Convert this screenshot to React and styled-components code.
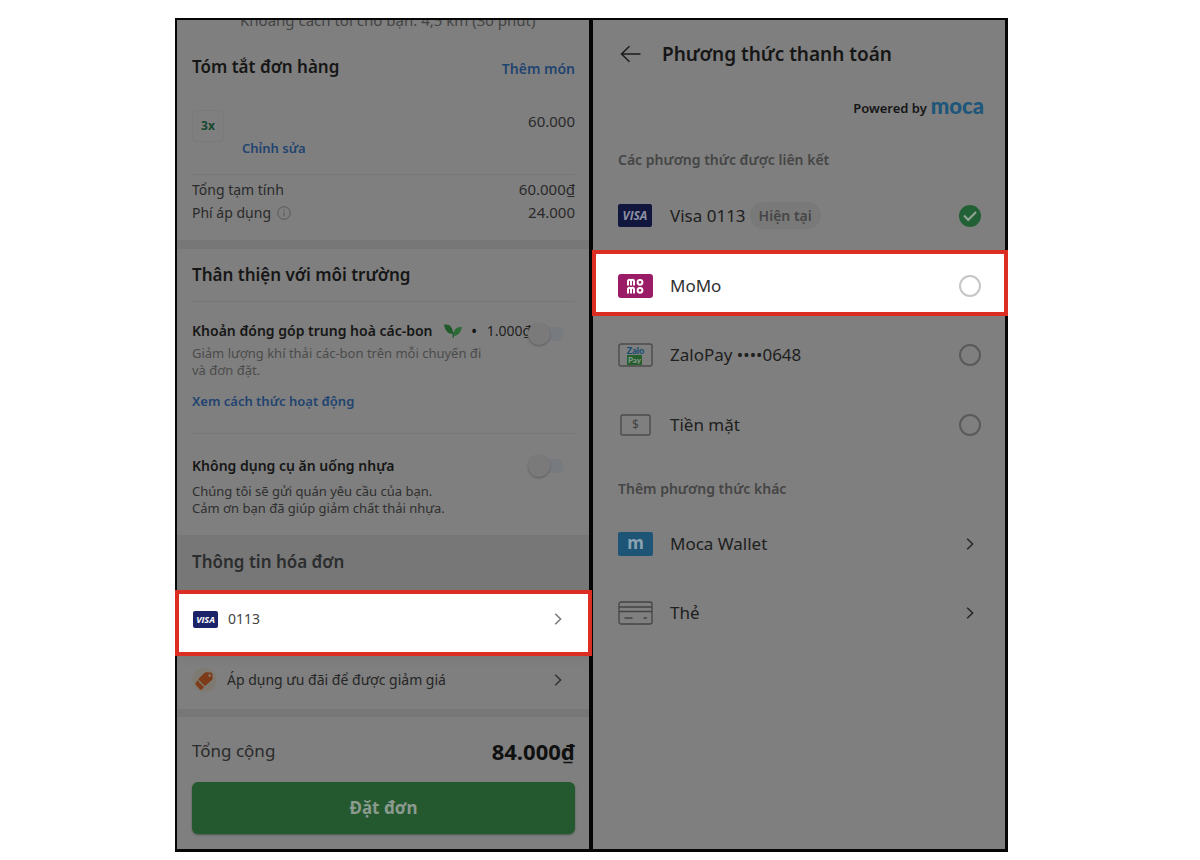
import React from "react";
import styled, { createGlobalStyle } from "styled-components";

const GlobalStyle = createGlobalStyle`
  * { box-sizing: border-box; }
  body {
    margin: 0;
    background: #fff;
    font-family: "Noto Sans", "Open Sans", sans-serif;
    color: #262626;
  }
  h1, h2, h3, p { margin: 0; }
  button { font-family: inherit; }
`;

const Page = styled.main`
  padding: 18px 16% 8px 175px;
`;

const Frame = styled.div`
  display: grid;
  grid-template-columns: 1fr 1fr;
  gap: 4px;
  padding: 2px 3px 3px 2px;
  background: #060606;
`;

const Screen = styled.section`
  min-width: 0;
  display: flex;
  flex-direction: column;
  background: #7f7f7f;
`;

const Block = styled.div`
  padding: ${(p) => p.$top}px 14px ${(p) => p.$bottom || 0}px 15px;
`;

const Clip = styled.div`
  height: 10px;
  display: flex;
  align-items: flex-end;
  overflow: hidden;
  padding-left: 63px;
  font-size: 15px;
  line-height: 20px;
  color: #444;
  white-space: nowrap;
`;

const Row = styled.div`
  display: flex;
  align-items: flex-end;
  justify-content: space-between;
`;

const Heading = styled.h2`
  font-size: 17px;
  line-height: 24px;
  font-weight: 600;
  color: ${(p) => (p.$soft ? "#2b2d2e" : "#161616")};
`;

const Link = styled.a`
  font-size: 14px;
  line-height: 20px;
  font-weight: 600;
  color: #1f4470;
  text-decoration: none;
  white-space: nowrap;
`;

const HowLink = styled(Link)`
  display: block;
  margin-top: 12px;
  font-size: 13px;
`;

const EditLink = styled(Link)`
  margin-top: 28px;
  font-size: 13px;
`;

const Item = styled.div`
  display: grid;
  grid-template-columns: 32px 1fr auto;
  column-gap: 18px;
  margin-bottom: 3px;
  padding: 31px 0 16px;
  border-bottom: 1px solid #777;
`;

const Quantity = styled.span`
  width: 32px;
  height: 32px;
  border: 1px solid #7a7a7a;
  border-radius: 4px;
  font-size: 12px;
  line-height: 30px;
  font-weight: 700;
  text-align: center;
  color: #15482f;
`;

const Price = styled.span`
  font-size: 15px;
  line-height: 23px;
  color: #2a2a2a;
`;

const Label = styled.span`
  display: inline-flex;
  align-items: center;
  gap: 6px;
  font-size: 14px;
  line-height: 23px;
  color: #2a2a2a;
`;

const Band = styled.div`
  height: ${(p) => p.$h}px;
  background: #777;
`;

const Rule = styled.hr`
  height: 1px;
  border: 0;
  margin: ${(p) => p.$top}px 0 0;
  background: #777;
`;

const OptionRow = styled.div`
  display: flex;
  align-items: ${(p) => (p.$low ? "flex-end" : "center")};
  height: ${(p) => (p.$low ? 26 : 24)}px;
  margin-top: ${(p) => p.$top}px;
`;

const OptionText = styled.label`
  flex: 1;
  min-width: 0;
  display: flex;
  align-self: flex-start;
  align-items: center;
  white-space: nowrap;
  font-size: 14px;
  line-height: 24px;
  font-weight: 600;
  color: #161616;
`;

const Leaf = styled.svg`
  flex: none;
  margin: 0 10px 0 11px;
`;

const Cost = styled.span`
  margin-left: 10px;
  font-weight: 400;
  color: #222;
`;

const Toggle = styled.input`
  appearance: none;
  position: relative;
  flex: none;
  display: flex;
  align-items: center;
  width: 35px;
  height: 22px;
  margin: 0 12px 0 0;
  background: linear-gradient(#777a7e, #777a7e) right center / 20px 14px no-repeat;
  border-radius: 11px;
  &::before {
    content: "";
    width: 22px;
    height: 22px;
    border-radius: 50%;
    background: #7a7a7a;
    box-shadow: 0 1px 2px #5c5c5c;
  }
`;

const Note = styled.p`
  margin-top: ${(p) => p.$top || 0}px;
  font-size: 13px;
  line-height: 17px;
  color: ${(p) => (p.$dark ? "#2f2f2f" : "#4b4b4b")};
`;

const BillHead = styled.div`
  margin-top: 18px;
  padding: 15px 15px 16px;
  background: #777;
`;

const highlight = `
  position: relative;
  border: 4px solid #db2d22;
  background: #fff;
`;

const CardRow = styled.button`
  ${highlight}
  display: flex;
  align-items: center;
  height: 66px;
  margin: 0 -3px 0 -2px;
  padding: 0 26px 8px 14px;
  gap: 10px;
  font-size: 14px;
  line-height: 20px;
  text-align: left;
  color: #444;
`;

const OfferRow = styled.button`
  display: flex;
  align-items: center;
  gap: 10px;
  width: 100%;
  height: 53px;
  padding: 0 27px 6px 15px;
  border: 0;
  background: linear-gradient(#7b7b7b, #7f7f7f 12px);
  font-size: 14px;
  line-height: 20px;
  text-align: left;
  color: #262626;
`;

const Grow = styled.span`
  flex: 1;
`;

const Total = styled.strong`
  font-size: 22px;
  line-height: 28px;
  font-weight: 700;
  color: #101010;
`;

const TotalLabel = styled.span`
  font-size: 17px;
  line-height: 28px;
  color: #2a2a2a;
`;

const OrderButton = styled.button`
  display: block;
  width: 100%;
  height: 52px;
  margin: 17px 0 15px;
  border: 0;
  border-radius: 6px;
  background: #24592f;
  box-shadow: 0 1px 2px #4a5a4e;
  font-size: 17px;
  line-height: 24px;
  font-weight: 700;
  color: #8b9a8e;
`;

const TopBar = styled.header`
  display: flex;
  align-items: center;
  gap: 21px;
  padding: 20px 24px 0 27px;
`;

const BackButton = styled.button`
  display: flex;
  padding: 0;
  border: 0;
  background: none;
`;

const Title = styled.h1`
  font-size: 19px;
  line-height: 28px;
  font-weight: 600;
  color: #161616;
`;

const Powered = styled.p`
  display: flex;
  align-items: center;
  justify-content: flex-end;
  gap: 4px;
  height: 24px;
  margin-top: 28px;
  padding-right: 21px;
  font-size: 13px;
  line-height: 24px;
  font-weight: 600;
  color: #161616;
`;

const Moca = styled.span`
  font-family: Lato, sans-serif;
  font-size: 22px;
  line-height: 20px;
  padding-bottom: 4px;
  font-weight: 900;
  color: #1d567a;
`;

const GroupTitle = styled.h3`
  margin-top: ${(p) => p.$top}px;
  padding-left: 25px;
  font-size: 14px;
  line-height: 20px;
  font-weight: 600;
  color: #454545;
`;

const Method = styled.label`
  display: flex;
  align-items: center;
  height: ${(p) => p.$h}px;
  padding: ${(p) => p.$drop || 0}px 24px 0 25px;
  font-size: 17px;
  line-height: 24px;
  color: #202020;
`;

const ActiveMethod = styled(Method)`
  ${highlight}
  margin: 0 -3px 0 -1px;
  padding: 5px 23px 0 22px;
  color: #303030;
`;

const MoreMethods = styled.div`
  margin-top: 10px;
`;

const MethodButton = styled.button`
  display: flex;
  align-items: center;
  width: 100%;
  height: 69px;
  padding: 0 31px 0 25px;
  border: 0;
  background: none;
  font-size: 17px;
  line-height: 24px;
  text-align: left;
  color: #202020;
`;

const IconSlot = styled.span`
  flex: none;
  display: flex;
  width: 52px;
`;

const Tag = styled.span`
  margin-left: 4px;
  padding: 0 9px;
  border-radius: 14px;
  background: #797979;
  font-size: 14px;
  line-height: 27px;
  font-weight: 600;
  color: #464646;
`;

const Radio = styled.input`
  appearance: none;
  display: grid;
  place-items: center;
  width: 22px;
  height: 22px;
  margin: 0 0 0 auto;
  border: 2px solid ${(p) => (p.$light ? "#c6c6c6" : "#5a5a5a")};
  border-radius: 50%;
  &:checked {
    border-color: #226035;
    background: #226035;
  }
  &:checked::after {
    content: "";
    width: 10px;
    height: 5px;
    border: solid #93a598;
    border-width: 0 0 2px 2px;
    transform: translateY(-1px) rotate(-45deg);
  }
`;

const Visa = ({ w, h, bg, fg, size }) => (
  <svg width={w} height={h} aria-hidden="true">
    <rect width={w} height={h} rx="2" fill={bg} />
    <text x={w / 2} y={h / 2 + size * 0.36} textAnchor="middle" fill={fg}
      fontFamily="Open Sans, sans-serif" fontWeight="700" fontStyle="italic" fontSize={size}>VISA</text>
  </svg>
);

const Chevron = ({ color }) => (
  <svg width="8" height="14" viewBox="0 0 8 14" fill="none" stroke={color} strokeWidth="1.5" aria-hidden="true">
    <path d="M1.2 1.8 6.6 7l-5.4 5.2" />
  </svg>
);

const MomoIcon = () => (
  <svg width="35" height="24" viewBox="0 0 35 24" fill="none" stroke="#fff" strokeWidth="2" aria-hidden="true">
    <rect width="35" height="24" rx="3" fill="#9b1c66" stroke="none" />
    {[0, 8].map((y) => (
      <g key={y} transform={`translate(0 ${y})`}>
        <path d="M10 11.500V7.300q0-1.500 1.500-1.500t1.500 1.500v4.200M13 7.300q0-1.500 1.500-1.500t1.500 1.500v4.200" />
        <circle cx="22" cy="8.300" r="2.400" />
      </g>
    ))}
  </svg>
);

const ZaloIcon = () => (
  <svg width="35" height="24" viewBox="0 0 35 24" aria-hidden="true">
    <rect x="1" y="1" width="33" height="22" rx="2" fill="none" stroke="#4c4c4c" strokeWidth="1.4" />
    <rect x="9" y="12" width="15" height="10" fill="#255f2e" />
    <g fontFamily="Lato, sans-serif" fontWeight="900" fontSize="9" textAnchor="middle">
      <text x="17.500" y="10.500" fill="#174d70">Zalo</text>
      <text x="16.500" y="19.500" fontSize="8" fill="#85998a">Pay</text>
    </g>
  </svg>
);

const CashIcon = () => (
  <svg width="35" height="24" viewBox="0 0 35 24" aria-hidden="true">
    <rect x="3" y="2" width="29" height="20" rx="1.5" fill="none" stroke="#4c4c4c" strokeWidth="1.4" />
    <text x="17.5" y="16" fill="#444" fontSize="12" textAnchor="middle">$</text>
  </svg>
);

const MocaIcon = () => (
  <svg width="35" height="24" viewBox="0 0 35 24" aria-hidden="true">
    <rect width="35" height="24" rx="2" fill="#1e5576" />
    <text x="17.5" y="17" fill="#8ba3b1" fontSize="17" fontWeight="700" textAnchor="middle">m</text>
  </svg>
);

const CardIcon = () => (
  <svg width="35" height="24" viewBox="0 0 35 24" fill="none" stroke="#444" strokeWidth="1.3" aria-hidden="true">
    <rect x="1" y="1" width="33" height="22" rx="2" />
    <path d="M1 6h33M1 10.5h33M6.5 17h8M25.5 17h3.5" />
  </svg>
);

const OfferIcon = () => (
  <svg width="25" height="26" viewBox="0 0 25 26" aria-hidden="true">
    <circle cx="12.5" cy="13" r="12" fill="#7e7971" />
    <path d="M6.200 12.200 12.400 6q.7-.7 1.700-.7l4.500.3q1.700.1 1.800 1.800l.2 3.800q0 1-.7 1.700L13 19z" fill="#7d3b17" />
    <path d="M5.300 13.200 12 20.200l-2.300 2.300q-.9.800-1.700-.1l-4.200-4.600q-.8-1 0-1.900z" fill="#7d3b17" />
    <path d="M5.800 12.700l6.700 6.900" stroke="#7e6a58" strokeWidth=".6" />
    <circle cx="17.6" cy="8.6" r="1.3" fill="#85796f" />
  </svg>
);

const InfoIcon = () => (
  <svg width="14" height="14" viewBox="0 0 14 14" fill="none" stroke="#585858" aria-hidden="true">
    <circle cx="7" cy="7" r="6.3" />
    <path d="M7 6v4.4M7 3.6v1.2" />
  </svg>
);

const LeafIcon = () => (
  <Leaf width="18" height="15" viewBox="0 0 18 15" aria-hidden="true">
    <path d="M0 .5C5.500-.2 9 2.600 9 10 4 10 1.200 7 0 .5z" fill="#1f5a2b" />
    <path d="M18 3C12 2.600 9.500 5.500 9.500 12 14 11.700 16.500 8.500 18 3z" fill="#2b6b35" />
    <path d="M9.200 8v6" stroke="#1f5a2b" strokeWidth="1.200" />
  </Leaf>
);

function OrderScreen() {
  return (
    <Screen>
      <Clip>Khoảng cách tới chỗ bạn: 4,5 km (30 phút)</Clip>
      <Block $top={25} $bottom={16}>
        <Row>
          <Heading>Tóm tắt đơn hàng</Heading>
          <Link href="#add">Thêm món</Link>
        </Row>
        <Item>
          <Quantity>3x</Quantity>
          <EditLink href="#edit">Chỉnh sửa</EditLink>
          <Price>60.000</Price>
        </Item>
        <Row>
          <Label>Tổng tạm tính</Label>
          <Price>60.000₫</Price>
        </Row>
        <Row>
          <Label>Phí áp dụng <InfoIcon /></Label>
          <Price>24.000</Price>
        </Row>
      </Block>
      <Band $h={9} />
      <Block $top={14}>
        <Heading>Thân thiện với môi trường</Heading>
        <Rule $top={14} />
        <OptionRow $top={17} $low>
          <OptionText htmlFor="carbon">
            Khoản đóng góp trung hoà các-bon <LeafIcon /> • <Cost>1.000₫</Cost>
          </OptionText>
          <Toggle id="carbon" type="checkbox" role="switch" />
        </OptionRow>
        <Note>Giảm lượng khí thải các-bon trên mỗi chuyến đi<br />và đơn đặt.</Note>
        <HowLink href="#how">Xem cách thức hoạt động</HowLink>
        <Rule $top={22} />
        <OptionRow $top={20}>
          <OptionText htmlFor="plastic">Không dụng cụ ăn uống nhựa</OptionText>
          <Toggle id="plastic" type="checkbox" role="switch" />
        </OptionRow>
        <Note $dark $top={5}>Chúng tôi sẽ gửi quán yêu cầu của bạn.<br />Cảm ơn bạn đã giúp giảm chất thải nhựa.</Note>
      </Block>
      <BillHead>
        <Heading $soft>Thông tin hóa đơn</Heading>
      </BillHead>
      <CardRow type="button">
        <Visa w={25} h={17} bg="#1b2468" fg="#fff" size={9} />
        <Grow>0113</Grow>
        <Chevron color="#777" />
      </CardRow>
      <OfferRow type="button">
        <OfferIcon />
        <Grow>Áp dụng ưu đãi để được giảm giá</Grow>
        <Chevron color="#333" />
      </OfferRow>
      <Band $h={8} />
      <Block $top={20}>
        <Row>
          <TotalLabel>Tổng cộng</TotalLabel>
          <Total>84.000₫</Total>
        </Row>
        <OrderButton type="button">Đặt đơn</OrderButton>
      </Block>
    </Screen>
  );
}

function PaymentScreen() {
  return (
    <Screen>
      <TopBar>
        <BackButton type="button" aria-label="Quay lại">
          <svg width="21" height="18" viewBox="0 0 21 18" fill="none" stroke="#1c1c1c" strokeWidth="1.5" aria-hidden="true">
            <path d="M20.500 9H1.500M9.500 1.200 1.500 9l8 7.800" />
          </svg>
        </BackButton>
        <Title>Phương thức thanh toán</Title>
      </TopBar>
      <Powered>Powered by <Moca>moca</Moca></Powered>
      <GroupTitle $top={30}>Các phương thức được liên kết</GroupTitle>
      <Method $h={80} $drop={11}>
        <IconSlot><Visa w={34} h={23} bg="#10163e" fg="#8d90a2" size={12} /></IconSlot>
        Visa 0113 <Tag>Hiện tại</Tag>
        <Radio type="radio" name="method" defaultChecked />
      </Method>
      <ActiveMethod $h={66}>
        <IconSlot><MomoIcon /></IconSlot>
        MoMo
        <Radio $light type="radio" name="method" />
      </ActiveMethod>
      <Method $h={78}>
        <IconSlot><ZaloIcon /></IconSlot>
        ZaloPay ••••0648
        <Radio type="radio" name="method" />
      </Method>
      <Method $h={62}>
        <IconSlot><CashIcon /></IconSlot>
        Tiền mặt
        <Radio type="radio" name="method" />
      </Method>
      <GroupTitle $top={23}>Thêm phương thức khác</GroupTitle>
      <MoreMethods>
        <MethodButton type="button">
          <IconSlot><MocaIcon /></IconSlot>
          <Grow>Moca Wallet</Grow>
          <Chevron color="#262626" />
        </MethodButton>
        <MethodButton type="button">
          <IconSlot><CardIcon /></IconSlot>
          <Grow>Thẻ</Grow>
          <Chevron color="#262626" />
        </MethodButton>
      </MoreMethods>
    </Screen>
  );
}

export default function App() {
  return (
    <>
      <GlobalStyle />
      <Page>
        <Frame>
          <OrderScreen />
          <PaymentScreen />
        </Frame>
      </Page>
    </>
  );
}
